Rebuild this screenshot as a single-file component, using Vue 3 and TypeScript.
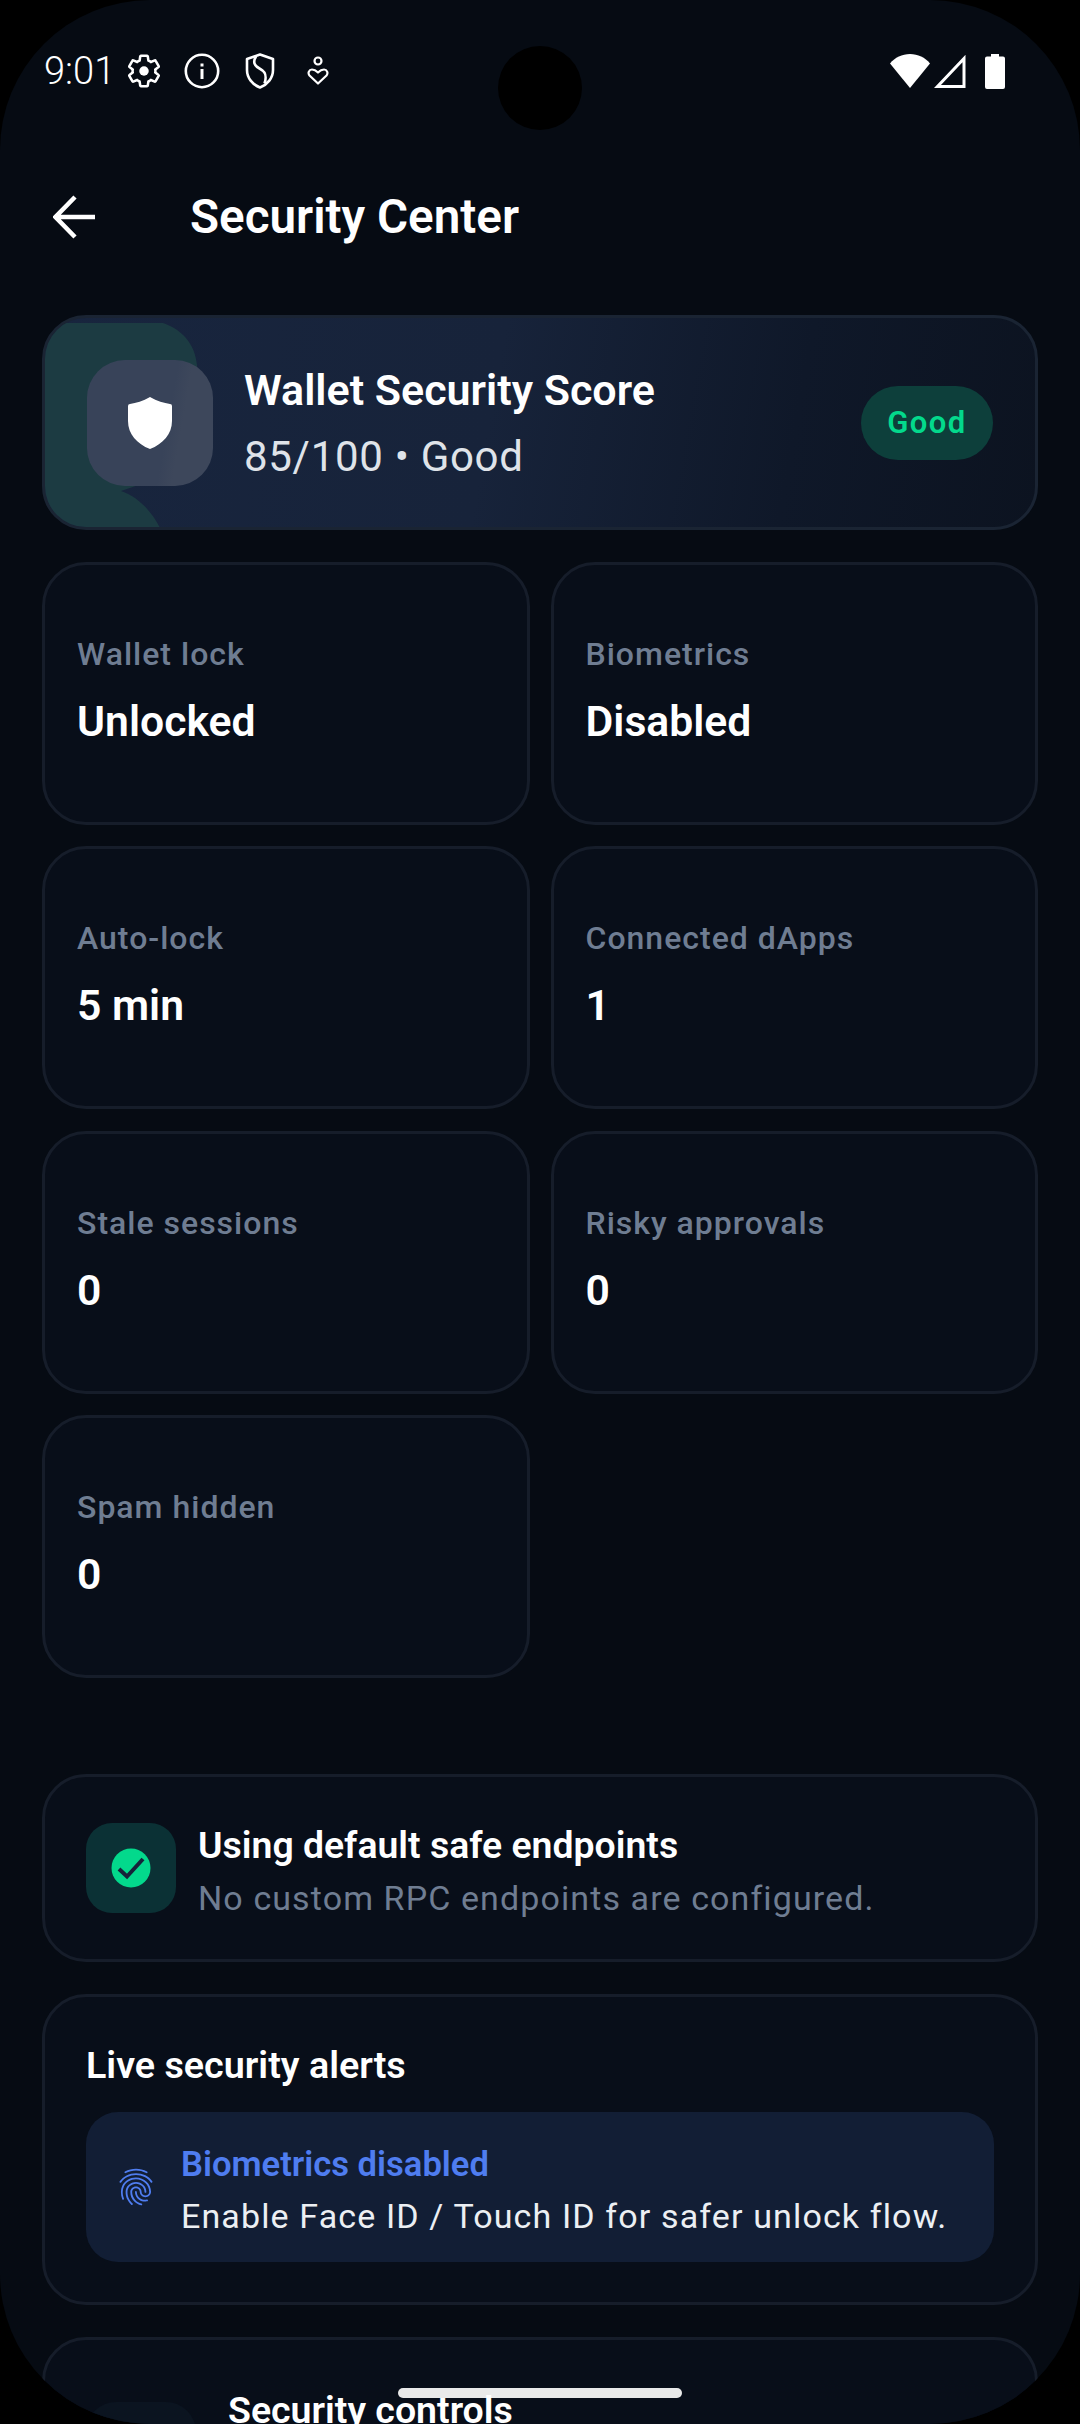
<template>
  <div class="screen">
    <div class="camera"></div>

    <div class="status">
      <span class="status__time">9:01</span>
      <svg class="ic-gear" viewBox="0 0 24 24" width="38" height="38">
        <path
          d="M19.14 12.94c.04-.3.06-.61.06-.94 0-.32-.02-.64-.07-.94l2.03-1.58c.18-.14.23-.41.12-.61l-1.92-3.32c-.12-.22-.37-.29-.59-.22l-2.39.96c-.5-.38-1.03-.7-1.62-.94l-.36-2.54c-.04-.24-.24-.41-.48-.41h-3.84c-.24 0-.43.17-.47.41l-.36 2.54c-.59.24-1.13.57-1.62.94l-2.39-.96c-.22-.08-.47 0-.59.22L2.74 8.87c-.12.21-.08.47.12.61l2.03 1.58c-.05.3-.09.63-.09.94s.02.64.07.94l-2.03 1.58c-.18.14-.23.41-.12.61l1.92 3.32c.12.22.37.29.59.22l2.39-.96c.5.38 1.03.7 1.62.94l.36 2.54c.05.24.24.41.48.41h3.84c.24 0 .44-.17.47-.41l.36-2.54c.59-.24 1.13-.56 1.62-.94l2.39.96c.22.08.47 0 .59-.22l1.92-3.32c.12-.22.07-.47-.12-.61l-2.01-1.58z"
          fill="none" stroke="#fff" stroke-width="1.6"
        />
        <circle cx="12" cy="12" r="3" fill="#fff" />
      </svg>
      <svg class="ic-info" viewBox="0 0 36 36" width="36" height="36">
        <circle cx="18" cy="18" r="16.2" fill="none" stroke="#fff" stroke-width="2.6" />
        <rect x="16.5" y="16" width="3" height="10" fill="#fff" />
        <rect x="16.5" y="10.5" width="3" height="3" fill="#fff" />
      </svg>
      <svg class="ic-shield" viewBox="0 0 30 36" width="30" height="36">
        <path
          d="M15 1.5 28 6v11c0 8-5.500 14.500-13 17.500C7.500 31.500 2 25 2 17V6z"
          fill="none" stroke="#fff" stroke-width="2.6" stroke-linejoin="round"
        />
        <path
          d="M11 3.500C7.500 9 9.500 13 14.500 15.500c5 2.500 8 6 5 15"
          fill="none" stroke="#fff" stroke-width="2.6"
        />
      </svg>
      <svg class="ic-heart" viewBox="0 0 22 30" width="22" height="30">
        <circle cx="11" cy="5" r="3.500" fill="none" stroke="#fff" stroke-width="2.200" />
        <path
          d="M11 27.500 2.500 19.500c-2-2.500-.5-6 2.500-6 3 0 4.500 1.500 6 3 1.500-1.500 3-3 6-3s4.500 3.500 2.500 6z"
          fill="none" stroke="#fff" stroke-width="2.200" stroke-linejoin="round"
        />
      </svg>

      <div class="status__right">
        <svg viewBox="0 0 40 34" width="40" height="34">
          <path d="M20 34 0 9.500C5 3.500 12 0 20 0s15 3.500 20 9.500z" fill="#fff" />
        </svg>
        <svg viewBox="0 0 32 34" width="32" height="34">
          <path d="M30 4.500V32.500H3.500z" fill="none" stroke="#fff" stroke-width="3" />
        </svg>
        <svg class="ic-battery" viewBox="0 0 20 35" width="20" height="35">
          <path d="M6 0h8v2.500h4a2 2 0 0 1 2 2V33a2 2 0 0 1-2 2H2a2 2 0 0 1-2-2V4.500a2 2 0 0 1 2-2h4z" fill="#fff" />
        </svg>
      </div>
    </div>

    <header class="topbar">
      <svg class="topbar__back" viewBox="0 0 42 44" width="42" height="44">
        <path d="M42 22H3M22 2 2.500 22 22 42" fill="none" stroke="#fff" stroke-width="4.500" />
      </svg>
      <h1 class="topbar__title">Security Center</h1>
    </header>

    <main class="content">
      <section class="hero">
        <svg class="hero__blob" viewBox="0 0 160 215" width="160" height="215">
          <path d="M0 8H118C136 14 150 28 152 50V150L76 176C94 182 108 198 116 215H0z" fill="#1c3b42" />
        </svg>
        <div class="hero__icon">
          <svg viewBox="0 0 44 52" width="44" height="52">
            <path d="M22 0C29 4 36 6 42 7a2 2 0 0 1 2 2V24C44 37 35 47 22 52 9 47 0 37 0 24V9a2 2 0 0 1 2-2C8 6 15 4 22 0z" fill="#fff" />
          </svg>
        </div>
        <div class="hero__text">
          <div class="hero__title">Wallet Security Score</div>
          <div class="hero__sub">85/100 • Good</div>
        </div>
        <span class="badge">Good</span>
      </section>

      <div class="stats">
        <div v-for="stat in stats" :key="stat.label" class="stat">
          <div class="stat__label">{{ stat.label }}</div>
          <div class="stat__value">{{ stat.value }}</div>
        </div>
      </div>

      <section class="card endpoint">
        <div class="endpoint__icon">
          <svg viewBox="0 0 40 40" width="40" height="40">
            <circle cx="20" cy="20" r="19.500" fill="#03d98c" />
            <path d="M8 21l8 7.500L32 11" fill="none" stroke="#16233a" stroke-width="4" />
          </svg>
        </div>
        <div class="endpoint__text">
          <div class="endpoint__title">Using default safe endpoints</div>
          <div class="endpoint__sub">No custom RPC endpoints are configured.</div>
        </div>
      </section>

      <section class="card alerts">
        <div class="alerts__title">Live security alerts</div>
        <div class="alert">
          <svg viewBox="0 0 24 24" width="44" height="44">
            <path
              d="M17.81 4.470c-.08 0-.16-.02-.23-.06C15.660 3.420 14 3 12.010 3c-1.980 0-3.860.47-5.570 1.410-.24.13-.54.04-.68-.2-.13-.24-.04-.55.2-.68C7.820 2.520 9.860 2 12.010 2c2.130 0 3.990.47 6.030 1.520.25.13.34.43.21.67-.09.18-.26.28-.44.28zM3.500 9.720c-.1 0-.2-.03-.29-.09-.23-.16-.28-.47-.12-.7.99-1.400 2.250-2.500 3.750-3.270C9.980 4.040 14 4.030 17.150 5.650c1.500.77 2.760 1.860 3.750 3.250.16.22.11.54-.12.7-.23.16-.54.11-.7-.12-.9-1.260-2.040-2.250-3.390-2.940-2.870-1.470-6.540-1.470-9.400.01-1.360.7-2.500 1.700-3.400 2.960-.08.14-.23.21-.39.21zm6.250 12.070c-.13 0-.26-.05-.35-.15-.87-.87-1.340-1.430-2.010-2.640-.69-1.230-1.050-2.730-1.050-4.340 0-2.970 2.540-5.390 5.660-5.390s5.660 2.420 5.660 5.390c0 .28-.22.5-.5.5s-.5-.22-.5-.5c0-2.420-2.090-4.390-4.660-4.390s-4.660 1.970-4.660 4.390c0 1.440.32 2.770.93 3.850.64 1.150 1.080 1.640 1.850 2.420.19.2.19.51 0 .71-.11.1-.24.15-.37.15zm7.170-1.850c-1.190 0-2.240-.3-3.100-.89-1.490-1.010-2.380-2.650-2.380-4.390 0-.28.22-.5.5-.5s.5.22.5.5c0 1.410.72 2.740 1.940 3.560.71.48 1.540.71 2.540.71.24 0 .64-.03 1.040-.1.27-.05.53.13.58.41.05.27-.13.53-.41.58-.57.11-1.070.12-1.210.12zM14.910 22c-.04 0-.09-.01-.13-.02-1.590-.44-2.630-1.030-3.720-2.100-1.400-1.390-2.170-3.240-2.170-5.220 0-1.620 1.380-2.940 3.080-2.940s3.080 1.320 3.080 2.940c0 1.070.93 1.940 2.080 1.940s2.080-.87 2.080-1.940c0-3.770-3.250-6.830-7.250-6.830-2.840 0-5.440 1.580-6.610 4.030-.39.81-.59 1.760-.59 2.800 0 .78.07 2.010.67 3.610.1.26-.03.55-.29.64-.26.1-.55-.04-.64-.29-.49-1.310-.73-2.610-.73-3.960 0-1.200.23-2.290.68-3.240 1.330-2.790 4.280-4.600 7.510-4.600 4.550 0 8.250 3.510 8.250 7.830 0 1.620-1.380 2.940-3.080 2.940s-3.080-1.320-3.080-2.940c0-1.070-.93-1.940-2.080-1.940s-2.080.87-2.080 1.940c0 1.710.66 3.310 1.870 4.510.95.94 1.860 1.460 3.270 1.850.27.07.42.35.35.61-.05.23-.26.38-.47.38z"
              fill="#4f7df0"
            />
          </svg>
          <div class="alert__text">
            <div class="alert__title">Biometrics disabled</div>
            <div class="alert__sub">Enable Face ID / Touch ID for safer unlock flow.</div>
          </div>
        </div>
      </section>

      <section class="card controls">
        <div class="controls__icon"></div>
        <div class="controls__title">Security controls</div>
      </section>
    </main>

    <div class="homebar"></div>
  </div>
</template>

<script setup lang="ts">
const stats: { label: string; value: string }[] = [
  { label: 'Wallet lock', value: 'Unlocked' },
  { label: 'Biometrics', value: 'Disabled' },
  { label: 'Auto-lock', value: '5 min' },
  { label: 'Connected dApps', value: '1' },
  { label: 'Stale sessions', value: '0' },
  { label: 'Risky approvals', value: '0' },
  { label: 'Spam hidden', value: '0' },
];
</script>

<style>
html,
body {
  margin: 0;
  background: #000;
}
</style>

<style scoped>
.screen {
  position: relative;
  width: 1080px;
  height: 2424px;
  overflow: hidden;
  border-radius: 150px;
  background: #060b13;
  font-family: Roboto, "Liberation Sans", sans-serif;
  color: #fff;
}

.camera {
  position: absolute;
  left: 498px;
  top: 46px;
  width: 84px;
  height: 84px;
  border-radius: 50%;
  background: #000;
}

.status {
  display: flex;
  align-items: center;
  height: 70px;
  padding: 36px 75px 0 44px;
  box-sizing: content-box;
}

.status__time {
  font-size: 38px;
  font-weight: 300;
  line-height: 70px;
  width: 81px;
}

.ic-info {
  margin-left: 21px;
}

.ic-shield {
  margin-left: 25px;
}

.ic-heart {
  margin-left: 32px;
}

.status__right {
  margin-left: auto;
  display: flex;
  align-items: center;
  gap: 4px;
}

.ic-battery {
  margin-left: 15px;
}

.topbar {
  display: flex;
  align-items: center;
  height: 72px;
  margin-top: 75px;
  padding-left: 53px;
}

.topbar__title {
  margin: 0 0 0 95px;
  font-size: 47.6px;
  font-weight: 600;
}

.content {
  display: flex;
  flex-direction: column;
  padding: 0 42px;
  margin-top: 62px;
}

.hero {
  position: relative;
  display: flex;
  align-items: center;
  height: 215px;
  box-sizing: border-box;
  padding: 0 42px;
  border: 3px solid #1a2433;
  border-radius: 44px;
  overflow: hidden;
  background: linear-gradient(100deg, #18253e 0%, #17233a 45%, #0f1829 75%, #0c1320 100%);
}

.hero__blob {
  position: absolute;
  left: 0;
  top: -3px;
}

.hero__icon {
  position: relative;
  display: flex;
  align-items: center;
  justify-content: center;
  width: 126px;
  height: 126px;
  border-radius: 38px;
  background: linear-gradient(100deg, #384359 62%, #3d475b 72%);
}

.hero__text {
  position: relative;
  margin-left: 31px;
  flex: 1;
  padding-top: 2px;
}

.hero__title {
  font-size: 43px;
  font-weight: 600;
  line-height: 64px;
}

.hero__sub {
  margin-top: 3px;
  font-size: 42px;
  line-height: 64px;
  letter-spacing: 0.7px;
  color: #dfe3e9;
}

.badge {
  display: flex;
  align-items: center;
  justify-content: center;
  width: 132px;
  height: 74px;
  border-radius: 37px;
  background: #0d3f3b;
  color: #03d98c;
  font-size: 31px;
  font-weight: 600;
  letter-spacing: 1.500px;
}

.stats {
  display: grid;
  grid-template-columns: 1fr 1fr;
  grid-auto-rows: 263px;
  gap: 21.33px 21px;
  margin-top: 32px;
}

.stat {
  box-sizing: border-box;
  padding: 67px 32px 0;
  border: 3px solid #161d2a;
  border-radius: 44px;
  background: #080e19;
}

.stat__label {
  font-size: 32px;
  font-weight: 500;
  line-height: 44px;
  letter-spacing: 1px;
  color: #6f7d92;
}

.stat__value {
  margin-top: 21px;
  font-size: 42.7px;
  font-weight: 600;
  line-height: 48px;
}

.card {
  box-sizing: border-box;
  border: 3px solid #161d2a;
  border-radius: 44px;
  background: #080e19;
}

.endpoint {
  display: flex;
  align-items: center;
  gap: 22px;
  height: 188px;
  margin-top: 96px;
  padding: 0 41px;
}

.endpoint__icon {
  display: flex;
  align-items: center;
  justify-content: center;
  width: 90px;
  height: 90px;
  border-radius: 26px;
  background: #0b3135;
}

.endpoint__text {
  padding-top: 7.5px;
}

.endpoint__title {
  font-size: 37.4px;
  font-weight: 600;
  line-height: 52px;
}

.endpoint__sub {
  margin-top: 1.5px;
  font-size: 34px;
  line-height: 52px;
  letter-spacing: 1.1px;
  color: #6f7d92;
}

.alerts {
  height: 311px;
  margin-top: 32px;
  padding: 43.5px 41px 0;
}

.alerts__title {
  font-size: 37.7px;
  font-weight: 600;
  line-height: 50px;
}

.alert {
  display: flex;
  align-items: center;
  gap: 23px;
  height: 150px;
  margin-top: 21.5px;
  padding: 0 28px;
  border-radius: 32px;
  background: #121e35;
}

.alert__text {
  padding-top: 6px;
}

.alert__title {
  font-size: 34.6px;
  font-weight: 600;
  line-height: 52px;
  color: #4f7df0;
}

.alert__sub {
  font-size: 34px;
  line-height: 52px;
  letter-spacing: 1.13px;
  color: #eceff3;
}

.controls {
  display: flex;
  align-items: flex-start;
  gap: 32px;
  height: 200px;
  margin-top: 32px;
  padding: 38px 41px 0;
}

.controls__icon {
  flex: none;
  width: 110px;
  height: 100px;
  margin-top: 24px;
  border-radius: 30px;
  background: #0b1420;
}

.controls__title {
  position: relative;
  margin-top: 6px;
  font-size: 37.5px;
  font-weight: 600;
  line-height: 52px;
  z-index: 2;
}

.homebar {
  position: absolute;
  left: 398px;
  top: 2388px;
  width: 284px;
  height: 10px;
  border-radius: 5px;
  background: #e9e9e9;
}
</style>
